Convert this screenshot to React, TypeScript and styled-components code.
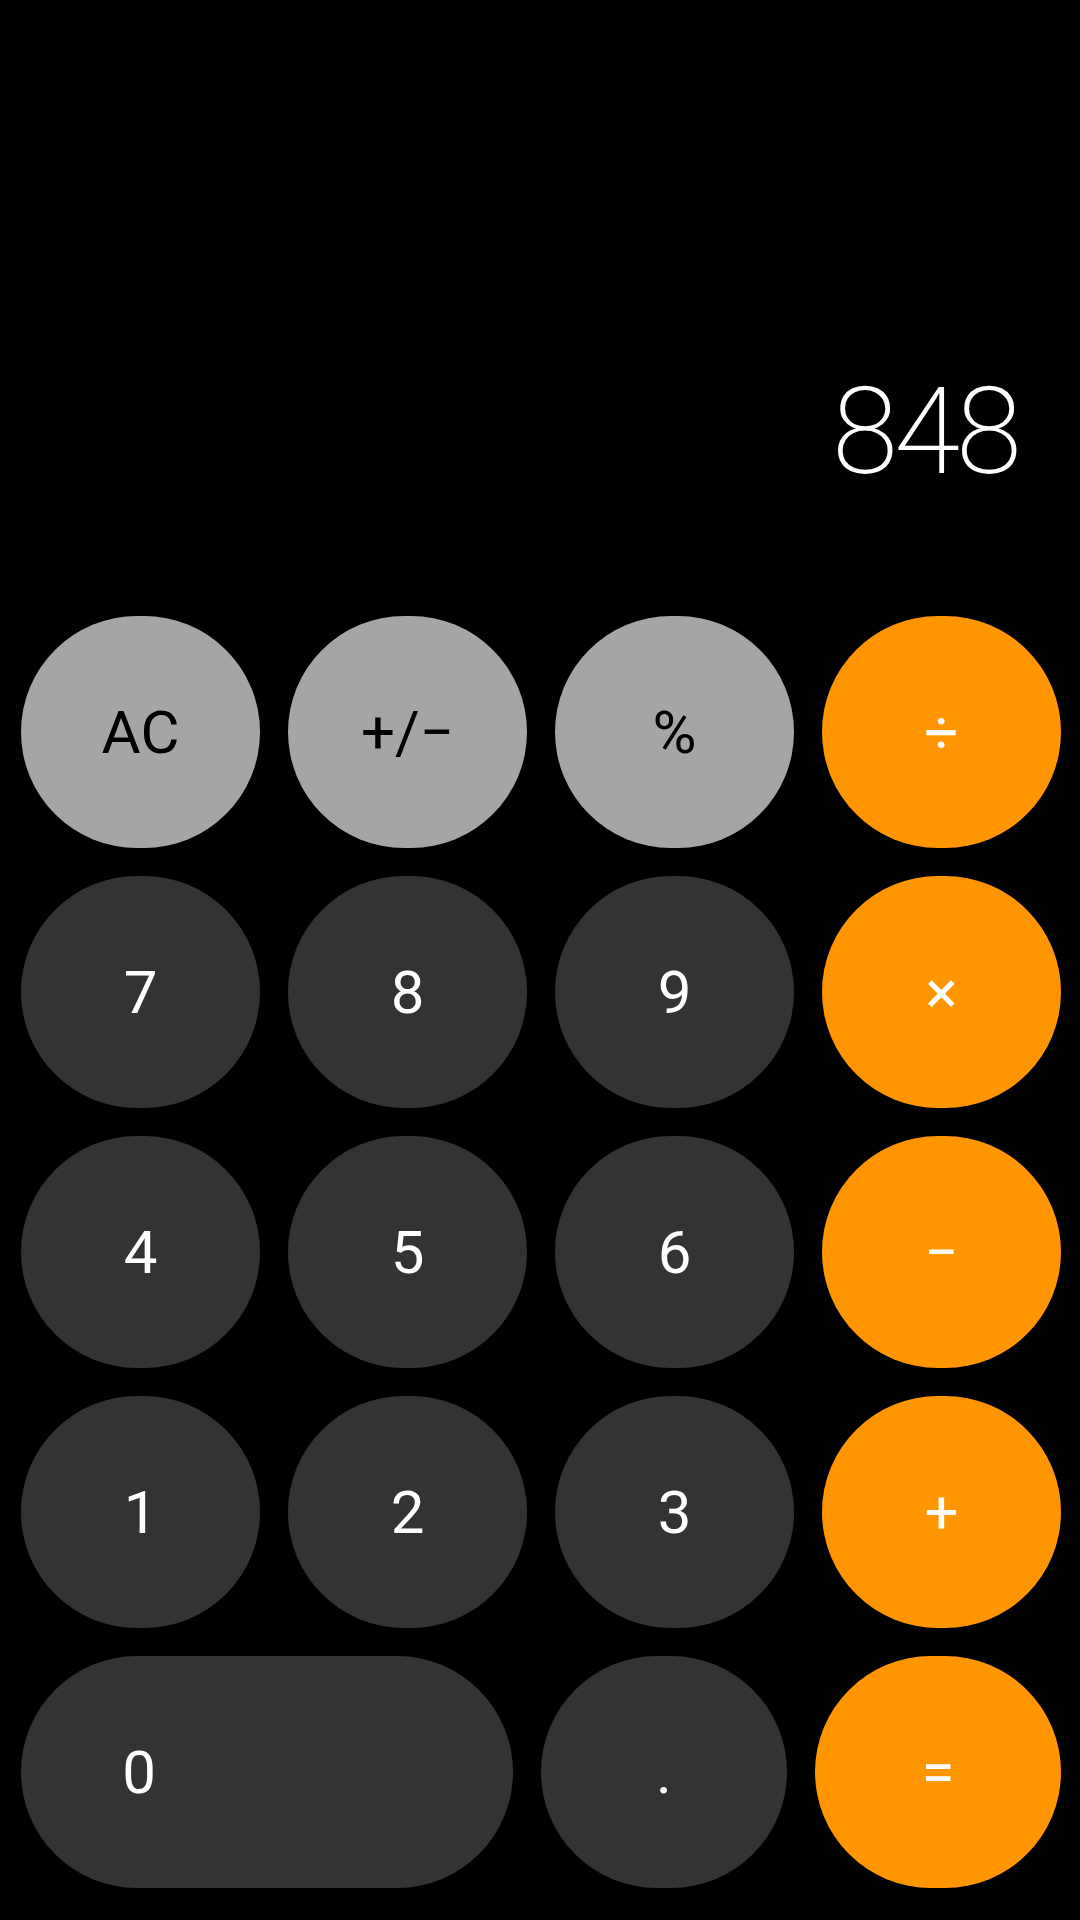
import React from 'react';
import styled, { createGlobalStyle } from 'styled-components';

type Variant = 'fn' | 'num' | 'op';

type Key = {
  label: string;
  variant: Variant;
  span?: number;
};

const rows: Key[][] = [
  [
    { label: 'AC', variant: 'fn' },
    { label: '+/−', variant: 'fn' },
    { label: '%', variant: 'fn' },
    { label: '÷', variant: 'op' },
  ],
  [
    { label: '7', variant: 'num' },
    { label: '8', variant: 'num' },
    { label: '9', variant: 'num' },
    { label: '×', variant: 'op' },
  ],
  [
    { label: '4', variant: 'num' },
    { label: '5', variant: 'num' },
    { label: '6', variant: 'num' },
    { label: '−', variant: 'op' },
  ],
  [
    { label: '1', variant: 'num' },
    { label: '2', variant: 'num' },
    { label: '3', variant: 'num' },
    { label: '+', variant: 'op' },
  ],
  [
    { label: '0', variant: 'num', span: 2 },
    { label: '.', variant: 'num' },
    { label: '=', variant: 'op' },
  ],
];

const colors: Record<Variant, { bg: string; fg: string }> = {
  fn: { bg: '#a5a5a5', fg: '#000000' },
  num: { bg: '#333333', fg: '#ffffff' },
  op: { bg: '#ff9500', fg: '#ffffff' },
};

const App = () => (
  <>
    <GlobalStyle />
    <Screen>
      <Display>848</Display>
      <Keypad>
        {rows.map((row, i) => (
          <Row key={i}>
            {row.map((k) => (
              <KeyButton key={k.label} $variant={k.variant} $span={k.span ?? 1}>
                <Label $wide={(k.span ?? 1) > 1}>{k.label}</Label>
              </KeyButton>
            ))}
          </Row>
        ))}
      </Keypad>
    </Screen>
  </>
);

export default App;

const GlobalStyle = createGlobalStyle`
  html, body {
    margin: 0;
    padding: 0;
    background: #000;
  }
  * {
    box-sizing: border-box;
  }
`;

const Screen = styled.main`
  width: 1080px;
  height: 1920px;
  background: #000;
  display: flex;
  flex-direction: column;
  justify-content: flex-end;
  font-family: Roboto, 'Noto Sans', sans-serif;
`;

const Display = styled.div`
  color: #fff;
  font-size: 120px;
  font-weight: 200;
  letter-spacing: -4px;
  line-height: 1;
  text-align: right;
  padding-right: 62px;
  margin-bottom: 124px;
`;

const Keypad = styled.div`
  display: flex;
  flex-direction: column;
  gap: 28px;
  padding: 0 19px 32px 21px;
`;

const Row = styled.div`
  display: flex;
  gap: 28px;
`;

const KeyButton = styled.button<{ $variant: Variant; $span: number }>`
  flex: ${({ $span }) => $span} 1 0;
  min-width: 0;
  height: 232px;
  padding: 0;
  border: none;
  border-radius: 116px;
  background: ${({ $variant }) => colors[$variant].bg};
  color: ${({ $variant }) => colors[$variant].fg};
  font-family: Roboto, 'Noto Sans', sans-serif;
  font-size: 60px;
  font-weight: 400;
  display: flex;
  align-items: center;
  justify-content: ${({ $span }) => ($span > 1 ? 'flex-start' : 'center')};
  cursor: pointer;
`;

const Label = styled.span<{ $wide: boolean }>`
  width: ${({ $wide }) => ($wide ? 'calc(50% - 10px)' : 'auto')};
  text-align: center;
`;
